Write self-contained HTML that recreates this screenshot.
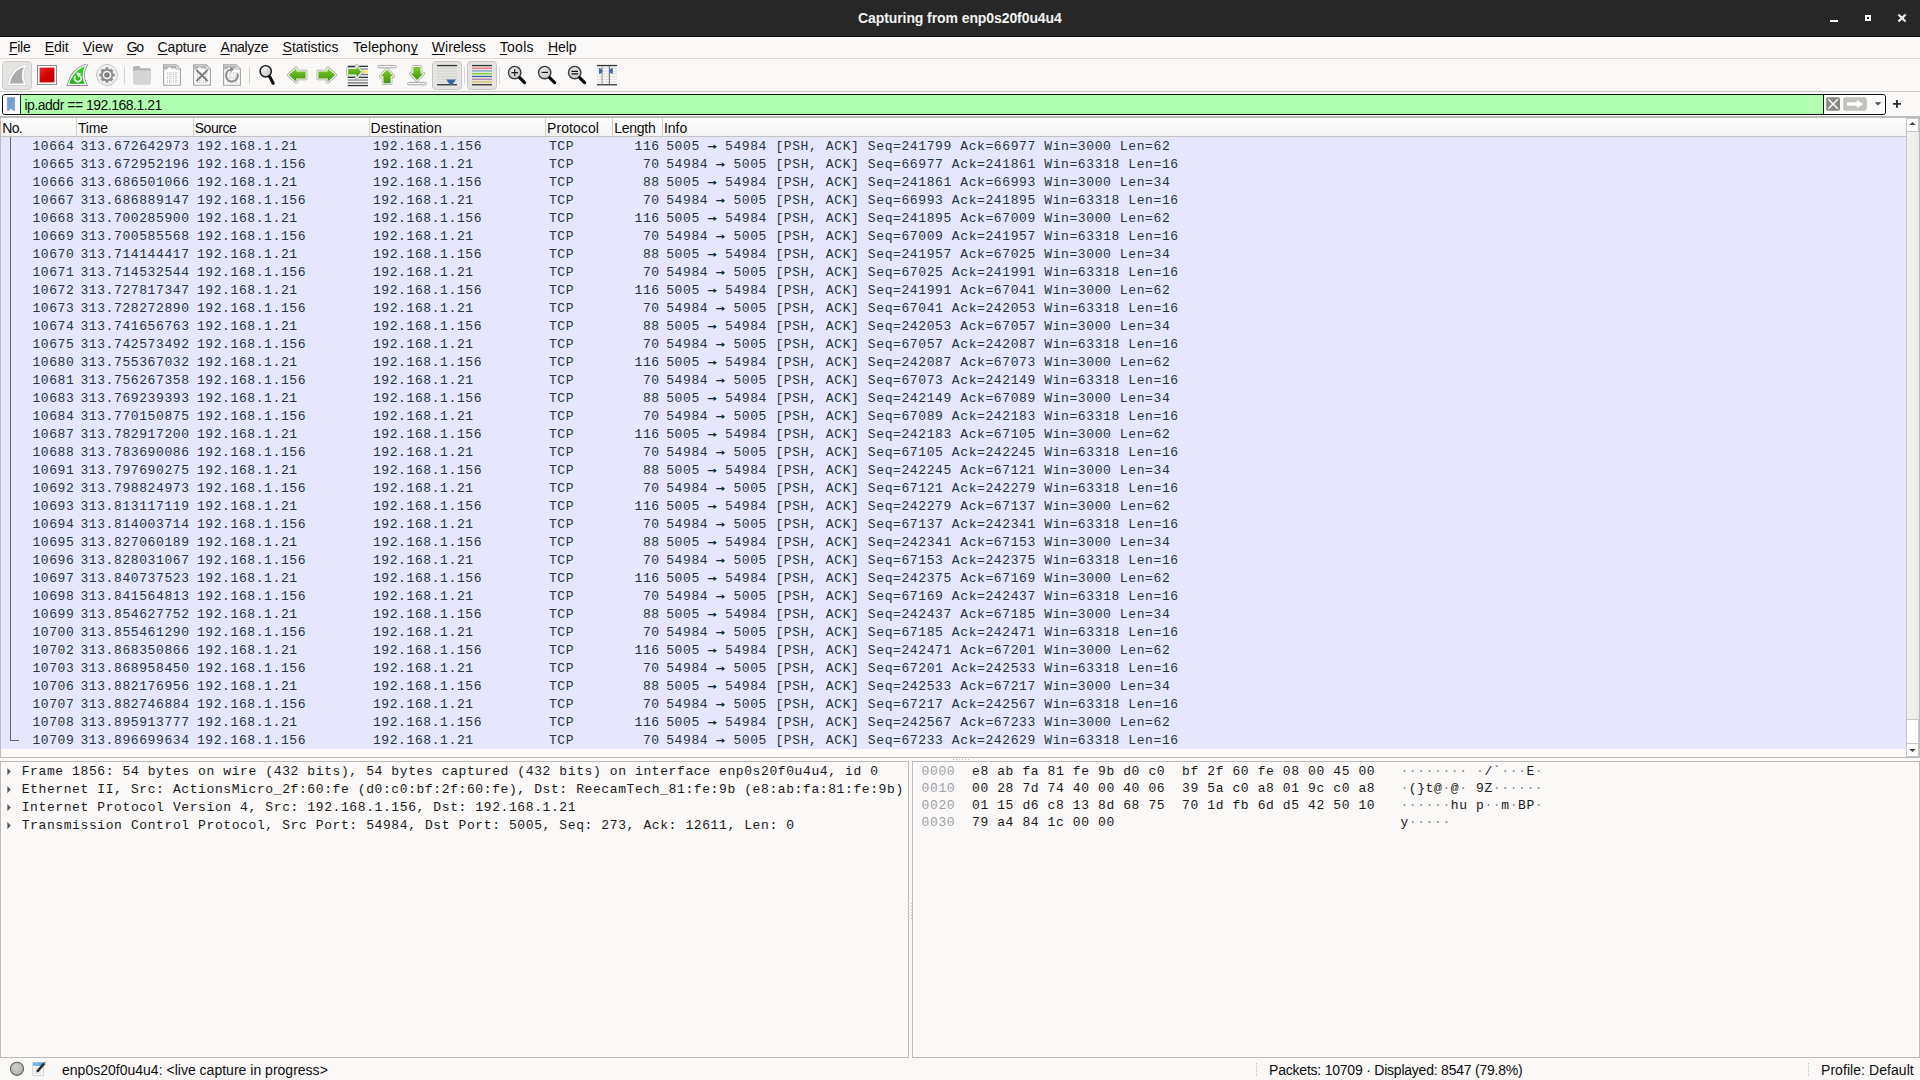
<!DOCTYPE html>
<html><head><meta charset="utf-8"><title>Capturing from enp0s20f0u4u4</title>
<style>
html,body{margin:0;padding:0}
body{width:1920px;height:1080px;position:relative;overflow:hidden;background:#faf9f8;font-family:"Liberation Sans",sans-serif;font-size:14px}
div,span,svg{position:absolute;box-sizing:border-box}
.s{white-space:pre;line-height:normal}
.s u{text-decoration:underline;text-decoration-thickness:1px;text-underline-offset:2px;text-decoration-skip-ink:none}
#title{left:0;top:0;width:1920px;height:37px;background:#272727;border-bottom:1px solid #0a0a0a}
#menusep{left:0;top:58px;width:1920px;height:1px;background:#dcdbda}
#tbsep{left:0;top:91px;width:1920px;height:1px;background:#c9c8c7}
#filter{left:2px;top:94px;width:1884px;height:21px;border:1px solid #0c0c0c;border-radius:3px;background:#fbfaf9;overflow:hidden}
#filter .l{left:0;top:0;width:17px;height:19px;border:1px solid #fff;border-right:none;border-radius:2px 0 0 2px}
#filter .dl{left:17px;top:0;width:1px;height:19px;background:#2a2a2a}
#filter .rr{left:1821px;top:0;width:61px;height:19px;border:1px solid #fff;border-left:none;border-radius:0 2px 2px 0}
#filter .g{left:18px;top:0;width:1802px;height:19px;background:#afffaf}
#filter .dv{left:1820px;top:0;width:1px;height:19px;background:#0c0c0c}
#plist{left:0;top:116px;width:1920px;height:642px;border:1px solid #bcbbba;background:#faf9f8}
#pl2{left:1px;top:117px;width:1918px;height:1px;background:#bebdbc}
#phead{left:1px;top:118px;width:1905px;height:19px;background:linear-gradient(#ffffff,#f4f3f2);border-bottom:1px solid #c4c3c2}
.hs{top:118px;width:1px;height:18px;background:#d2d1d0}
#prows{left:1px;top:137px;width:1905px;height:612px;background:#e7e6ff}
#rel{left:10px;top:137px;width:1px;height:604px;background:#62626a}
#relb{left:10px;top:740px;width:9px;height:1px;background:#62626a}
.r{left:0;width:1906px;height:18px;font-family:"Liberation Mono",monospace;font-size:13px;letter-spacing:0.6px;line-height:19px;color:#22353c;white-space:pre}
.c{white-space:pre;top:0}
.c b{position:relative;top:-1px;font-weight:normal;-webkit-text-stroke:0.7px #12272e;color:#12272e}
.d{left:21.7px;width:886px;height:18px;font-family:"Liberation Mono",monospace;font-size:13px;letter-spacing:0.6px;line-height:19px;color:#181818;white-space:pre}
.d .tri{left:-14.5px;top:4.5px}
.h{left:0;width:1920px;height:17px;font-family:"Liberation Mono",monospace;font-size:13px;letter-spacing:0.6px;line-height:19px;color:#181818;white-space:pre}
.ho{color:#a0a0a8}
.h i{font-style:normal;color:#8c8c8c}
#sb{left:1906px;top:118px;width:13px;height:639px;background:linear-gradient(90deg,#f1f1ef,#efefed 70%,#e7e7e6);border-left:1px solid #c6c5c4}
#sb div{left:0;width:12px;background:#fff;border:1px solid #c8c7c6;border-left:none}
#sb .up{top:0;height:14px}
#sb .th{top:601px;height:25px;border-bottom:none}
#sb .dn{top:625px;height:14px}
#pdet{left:0;top:761px;width:909px;height:297px;border:1px solid #bdbcbb}
#phex{left:912px;top:761px;width:1008px;height:297px;border:1px solid #bdbcbb}
</style></head><body>
<div id="title"></div>
<div id="menusep"></div><div id="tbsep"></div>
<div id="filter"><div class="l"></div><div class="dl"></div><div class="g"></div><div class="dv"></div><div class="rr"></div></div>
<div id="plist"></div><div id="pl2"></div>
<div id="phead"></div>
<div class="hs" style="left:76px"></div><div class="hs" style="left:193px"></div><div class="hs" style="left:369px"></div><div class="hs" style="left:545px"></div><div class="hs" style="left:612px"></div><div class="hs" style="left:662px"></div>
<div id="prows"></div><div id="rel"></div><div id="relb"></div>
<div id="sb"><div class="up"></div><div class="th"></div><div class="dn"></div></div>
<div id="pdet"></div><div id="phex"></div>
<svg style="left:0;top:59px" width="640" height="32" viewBox="0 59 640 32">
<defs>
<linearGradient id="gG" x1="0" y1="0" x2="0" y2="1"><stop offset="0" stop-color="#7ccd2a"/><stop offset="1" stop-color="#43930a"/></linearGradient>
<linearGradient id="gR" x1="0" y1="0" x2="1" y2="1"><stop offset="0" stop-color="#e62a2a"/><stop offset="0.5" stop-color="#d80000"/><stop offset="1" stop-color="#c00000"/></linearGradient>
<linearGradient id="gF" x1="0" y1="0" x2="0" y2="1"><stop offset="0" stop-color="#30e020"/><stop offset="1" stop-color="#18b010"/></linearGradient>
<radialGradient id="gL" cx="0.4" cy="0.35" r="0.7"><stop offset="0" stop-color="#ececec"/><stop offset="1" stop-color="#c4c4c4"/></radialGradient>
<clipPath id="cf"><rect x="0" y="64.1" width="640" height="40"/></clipPath><path id="fin" d="M21.2,1.6 C12.5,4.5 5.2,12 2.6,22.4 L21.6,22.4 C18.2,16 18.2,8.5 21.2,1.6 Z"/>
<g id="page"><path d="M0.6,0.6 H13.2 L17.4,4.8 V21.1 H0.6 Z" fill="#fdfdfd" stroke="#a4a4a4" stroke-width="1.1"/><path d="M1.2,1.2 H12.8 L14.5,4.4 H8.2 C7.8,3 6.6,2.6 5.6,3.4 L3.6,5.2 H1.2 Z" fill="#b4b4b4"/><path d="M12.9,0.9 V5 H17.1" fill="#e6e6e6" stroke="#b0b0b0" stroke-width="0.8"/></g>
<g id="bits"><rect x="4.1" y="7.9" width="0.9" height="3" fill="#cfcfcf"/><rect x="6.6" y="8.200000000000001" width="1.6" height="2.4" fill="none" stroke="#cfcfcf" stroke-width="0.7"/><rect x="9.899999999999999" y="7.9" width="0.9" height="3" fill="#cfcfcf"/><rect x="12.4" y="8.200000000000001" width="1.6" height="2.4" fill="none" stroke="#cfcfcf" stroke-width="0.7"/><rect x="4.1" y="11.9" width="0.9" height="3" fill="#cfcfcf"/><rect x="6.6" y="12.200000000000001" width="1.6" height="2.4" fill="none" stroke="#cfcfcf" stroke-width="0.7"/><rect x="9.899999999999999" y="11.9" width="0.9" height="3" fill="#cfcfcf"/><rect x="12.4" y="12.200000000000001" width="1.6" height="2.4" fill="none" stroke="#cfcfcf" stroke-width="0.7"/><rect x="4.1" y="15.9" width="0.9" height="3" fill="#cfcfcf"/><rect x="6.6" y="16.2" width="1.6" height="2.4" fill="none" stroke="#cfcfcf" stroke-width="0.7"/><rect x="9.899999999999999" y="15.9" width="0.9" height="3" fill="#cfcfcf"/><rect x="12.4" y="16.2" width="1.6" height="2.4" fill="none" stroke="#cfcfcf" stroke-width="0.7"/></g>
</defs>
<!-- 1 start (disabled, pressed bg) -->
<rect x="2.5" y="61.5" width="29" height="28" rx="3.5" fill="#e5e4e3" stroke="#cdcccb"/>
<g clip-path="url(#cf)"><path d="M23.8,67 C16.2,69.2 11.4,75.6 10,83.4 L23.8,83.4 C21.2,78 21.2,72.4 23.8,67 Z" fill="none" stroke="#cdcdcd" stroke-width="4.6" stroke-miterlimit="5"/><path d="M23.8,67 C16.2,69.2 11.4,75.6 10,83.4 L23.8,83.4 C21.2,78 21.2,72.4 23.8,67 Z" fill="none" stroke="#fdfdfd" stroke-width="3.4" stroke-miterlimit="5"/><path d="M23.8,67 C16.2,69.2 11.4,75.6 10,83.4 L23.8,83.4 C21.2,78 21.2,72.4 23.8,67 Z" fill="#ababab"/></g>
<!-- 2 stop -->
<rect x="37.5" y="65.5" width="19" height="19" fill="#fdfdfd" stroke="#8e8e8e"/>
<rect x="39.6" y="67.6" width="14.8" height="14.8" fill="url(#gR)"/>
<!-- 3 restart -->
<g clip-path="url(#cf)"><path d="M85,66.2 C77,69.2 71.4,76 69.4,83.8 L84.8,83.8 C82,78 82,72 85,66.2 Z" fill="none" stroke="#8c8c8c" stroke-width="4.2" stroke-miterlimit="5"/><path d="M85,66.2 C77,69.2 71.4,76 69.4,83.8 L84.8,83.8 C82,78 82,72 85,66.2 Z" fill="none" stroke="#fdfdfd" stroke-width="2.6" stroke-miterlimit="5"/><path d="M85,66.2 C77,69.2 71.4,76 69.4,83.8 L84.8,83.8 C82,78 82,72 85,66.2 Z" fill="url(#gF)"/></g>
<path d="M75.2,76.2 A3.4,3.4 0 1 0 79.6,75.4" fill="none" stroke="#fff" stroke-width="1.8"/><path d="M76,72.6 L81,73.2 L78.4,77.4 Z" fill="#fff"/>
<!-- 4 options gear -->
<circle cx="107" cy="75" r="10.5" fill="#fbfbfb" stroke="#c4c4c4" stroke-width="1"/><circle cx="107" cy="75" r="9.3" fill="none" stroke="#e2e2e2" stroke-width="0.9"/>
<g transform="translate(107,75)" fill="#8d8d8d"><circle r="6.3"/>
<g id="teeth"><rect x="-1.6" y="-7.7" width="3.2" height="15.4" rx="0.5"/><rect x="-7.7" y="-1.6" width="15.4" height="3.2" rx="0.5"/></g><use href="#teeth" transform="rotate(45)"/>
<circle r="4.3" fill="#fbfbfb"/><circle r="2.8" fill="#808080"/></g>
<!-- sep -->
<rect x="124" y="67" width="1" height="17" fill="#d3d2d1"/>
<!-- 5 open folder (disabled) -->
<path d="M133,67.6 Q133,66 134.6,66 H138.6 Q139.8,66 140.2,67.2 L140.6,68.2 H149.4 Q151,68.2 151,69.8 V71 H133 Z" fill="#b2b2b2"/>
<rect x="133" y="70.2" width="18" height="14.6" rx="1.8" fill="#d4d4d4"/>
<!-- 6 save -->
<g transform="translate(163,64.2)"><use href="#page"/><use href="#bits"/></g>
<!-- 7 close -->
<g transform="translate(193,64.2)"><use href="#page"/><use href="#bits"/><path d="M3.4,5.6 L14.6,17 M14.6,5.6 L3.4,17" stroke="#7a7a7a" stroke-width="1.9" fill="none"/></g>
<!-- 8 reload -->
<g transform="translate(223,64.2)"><use href="#page"/><use href="#bits"/><path d="M7.6,5.4 A6,6 0 1 0 14.6,9.4" stroke="#8a8a8a" stroke-width="1.8" fill="none"/><path d="M7,2.4 L11.2,5 L7.4,8 Z" fill="#8a8a8a"/></g>
<rect x="249" y="67" width="1" height="17" fill="#d3d2d1"/>
<!-- 9 find -->
<circle cx="265.7" cy="71.3" r="5.6" fill="url(#gL)" stroke="#1c1c1c" stroke-width="1.5"/>
<path d="M262.2,69.2 A3.8,3.8 0 0 1 267.4,67.6" stroke="#fff" stroke-width="0.9" fill="none" opacity="0.9"/>
<path d="M269.6,76.6 L273.2,83.2" stroke="#0a0a0a" stroke-width="3.1" stroke-linecap="round"/>
<!-- 10 back -->
<g id="larr"><path d="M288.8,75 L296.4,68.2 V71.6 H305.6 V78.4 H296.4 V81.8 Z" fill="none" stroke="#a2a2a2" stroke-width="3.6" stroke-linejoin="round"/><path d="M288.8,75 L296.4,68.2 V71.6 H305.6 V78.4 H296.4 V81.8 Z" fill="none" stroke="#fbfbfb" stroke-width="2.2" stroke-linejoin="round"/><path d="M288.8,75 L296.4,68.2 V71.6 H305.6 V78.4 H296.4 V81.8 Z" fill="url(#gG)"/></g>
<!-- 11 forward -->
<use href="#larr" transform="translate(624,0) scale(-1,1)"/>
<!-- 12 goto -->
<g><rect x="347.7" y="65.7" width="20.3" height="1.3" fill="#2e3436"/><rect x="347.7" y="68.4" width="20.3" height="1.3" fill="#8a8c88"/><rect x="347.7" y="71" width="20.3" height="1.6" fill="#b9bbb6"/><rect x="361" y="70.6" width="7" height="2.2" fill="#fce94f"/><rect x="347.7" y="73.9" width="20.3" height="1.3" fill="#6a6d69"/><rect x="347.7" y="76.7" width="20.3" height="1.3" fill="#2e3436"/><rect x="347.7" y="79.4" width="20.3" height="1.3" fill="#8a8c88"/><rect x="347.7" y="82.2" width="20.3" height="1.3" fill="#6a6d69"/><rect x="347.7" y="84.9" width="20.3" height="1.3" fill="#2e3436"/>
<path d="M348.2,69 H356.6 V66 L361.4,71.8 L356.6,77.6 V74.6 H348.2 Z" fill="none" stroke="#9c9c9c" stroke-width="3.6" stroke-linejoin="round"/><path d="M348.2,69 H356.6 V66 L361.4,71.8 L356.6,77.6 V74.6 H348.2 Z" fill="none" stroke="#fbfbfb" stroke-width="2.2" stroke-linejoin="round"/><path d="M348.2,69 H356.6 V66 L361.4,71.8 L356.6,77.6 V74.6 H348.2 Z" fill="url(#gG)"/></g>
<!-- 13 top -->
<rect x="377.5" y="65.4" width="19" height="2.4" rx="1.2" fill="#f3f3f3" stroke="#a2a2a2" stroke-width="0.9"/>
<path d="M387,69.6 L393.3,76.2 H390.6 V83.2 H383.4 V76.2 H380.7 Z" fill="none" stroke="#a2a2a2" stroke-width="3.6" stroke-linejoin="round"/><path d="M387,69.6 L393.3,76.2 H390.6 V83.2 H383.4 V76.2 H380.7 Z" fill="none" stroke="#fbfbfb" stroke-width="2.2" stroke-linejoin="round"/><path d="M387,69.6 L393.3,76.2 H390.6 V83.2 H383.4 V76.2 H380.7 Z" fill="url(#gG)"/>
<!-- 14 bottom -->
<path d="M417,80 L423.3,73.6 H420.6 V67 H413.4 V73.6 H410.7 Z" fill="none" stroke="#a2a2a2" stroke-width="3.6" stroke-linejoin="round"/><path d="M417,80 L423.3,73.6 H420.6 V67 H413.4 V73.6 H410.7 Z" fill="none" stroke="#fbfbfb" stroke-width="2.2" stroke-linejoin="round"/><path d="M417,80 L423.3,73.6 H420.6 V67 H413.4 V73.6 H410.7 Z" fill="url(#gG)"/>
<rect x="407.5" y="82.4" width="19" height="2.4" rx="1.2" fill="#f3f3f3" stroke="#a2a2a2" stroke-width="0.9"/>
<!-- 15 autoscroll (checked) -->
<rect x="432.5" y="61.5" width="29" height="28" rx="3.5" fill="#e5e4e3" stroke="#c6c5c4"/>
<g fill="#d5d8d1"><rect x="437" y="67.6" width="20" height="1.2"/><rect x="437" y="70.4" width="20" height="1.2"/><rect x="437" y="73.1" width="20" height="1.2"/><rect x="437" y="75.9" width="20" height="1.2"/><rect x="437" y="78.6" width="20" height="1.2"/><rect x="437" y="81.4" width="20" height="1.2"/></g>
<rect x="437" y="64.9" width="20" height="1.3" fill="#2e3436"/><rect x="437" y="84.1" width="20" height="1.3" fill="#2e3436"/>
<path d="M446.2,79.6 H456 L452.4,84.4 Q451.1,85.4 449.8,84.4 Z" fill="#3465a4"/>
<rect x="464" y="67" width="1" height="17" fill="#d8d7d6"/>
<!-- 16 colorize (checked) -->
<rect x="467.5" y="61.5" width="29" height="28" rx="3.5" fill="#e5e4e3" stroke="#c6c5c4"/>
<rect x="472" y="64.9" width="20" height="1.3" fill="#2e3436"/><rect x="472" y="67.6" width="20" height="1.25" fill="#ef6b6b"/><rect x="472" y="70.3" width="20" height="1.25" fill="#7f9fcd"/><rect x="472" y="73.1" width="20" height="1.2" fill="#73d216"/><rect x="472" y="75.85" width="20" height="1.2" fill="#3465a4"/><rect x="472" y="78.6" width="20" height="1.25" fill="#ad7fa8"/><rect x="472" y="81.35" width="20" height="1.25" fill="#d8bd50"/><rect x="472" y="84.1" width="20" height="1.3" fill="#2e3436"/>
<rect x="499" y="67" width="1" height="17" fill="#d8d7d6"/>
<!-- 17-19 zoom -->
<g id="zm"><circle cx="514.7" cy="72.6" r="6.2" fill="url(#gL)" stroke="#3a3a3a" stroke-width="1.4"/><path d="M519.8,77.8 L524.6,82.6" stroke="#0a0a0a" stroke-width="3.2" stroke-linecap="round"/></g>
<path d="M511.4,72.6 H518 M514.7,69.3 V75.9" stroke="#111" stroke-width="1.2"/>
<use href="#zm" x="30"/><path d="M541.6,72.4 H548" stroke="#111" stroke-width="1.2"/>
<use href="#zm" x="60"/><path d="M571.4,71.4 H578 M571.4,73.8 H578" stroke="#111" stroke-width="1.2"/>
<!-- 20 resize columns -->
<g fill="#dfe1dc"><rect x="597" y="67.8" width="20" height="1.2"/><rect x="597" y="70.5" width="20" height="1.2"/><rect x="597" y="73.3" width="20" height="1.2"/><rect x="597" y="76" width="20" height="1.2"/><rect x="597" y="78.8" width="20" height="1.2"/><rect x="597" y="81.5" width="20" height="1.2"/></g>
<rect x="597" y="64.9" width="20" height="1.3" fill="#2e3436"/><rect x="597" y="84.1" width="20" height="1.3" fill="#2e3436"/>
<rect x="601.4" y="66" width="1.4" height="18.4" fill="#aeb0ab"/><rect x="608.8" y="66" width="1.2" height="18.4" fill="#777a75"/>
<path d="M599,68 Q602.6,69 602.6,71 Q602.6,73 599,74 Z" fill="#3a6db8"/><path d="M612.8,68 Q609.2,69 609.2,71 Q609.2,73 612.8,74 Z" fill="#3a6db8"/>
</svg>
<!-- window controls -->
<svg style="left:1820px;top:8px" width="96" height="20" viewBox="1820 8 96 20">
<rect x="1830" y="20" width="8" height="2" fill="#f6f6f6"/>
<rect x="1866" y="16" width="4" height="4" fill="#0a0a0a" stroke="#f6f6f6" stroke-width="2"/>
<path d="M1899.2,15.2 L1904.8,20.8 M1904.8,15.2 L1899.2,20.8" stroke="#f6f6f6" stroke-width="2.2" stroke-linecap="square" fill="none"/>
</svg>
<!-- filter bar icons -->
<svg style="left:0;top:94px" width="1920" height="22" viewBox="0 94 1920 22">
<defs><linearGradient id="gB" x1="0" y1="0" x2="0" y2="1"><stop offset="0" stop-color="#6c9ad2"/><stop offset="1" stop-color="#7aa6d8"/></linearGradient></defs>
<path d="M7.1,97.3 H14.9 V110.9 H13.7 L11,108.7 L8.3,110.9 H7.1 Z" fill="url(#gB)"/>
<rect x="1826.2" y="97.2" width="13.8" height="13.6" rx="2" fill="#888a85"/>
<path d="M1828.4,99.3 L1837.8,108.7 M1837.8,99.3 L1828.4,108.7" stroke="#fdfdfd" stroke-width="1.45" fill="none"/>
<rect x="1843.2" y="97.2" width="23.6" height="13.6" rx="2.2" fill="#c2c1be"/>
<path d="M1847,102.2 H1856.8 V99.5 L1863,104 L1856.8,108.5 V105.8 H1847 Z" fill="#fdfdfd"/>
<path d="M1874.6,102.3 H1881.4 L1878,105.6 Z" fill="#4e4e4e"/>
<path d="M1893,103.9 H1901 M1897,100 V107.8" stroke="#2c2c2c" stroke-width="1.9" fill="none"/>
</svg>
<!-- scrollbar arrows -->
<svg style="left:1907px;top:119px" width="12" height="12" viewBox="0 0 12 12"><path d="M2.1,6.1 L5.5,2.9 L8.9,6.1 Z" fill="#4a4a4a"/></svg>
<svg style="left:1907px;top:744px" width="12" height="12" viewBox="0 0 12 12"><path d="M2.1,4.9 L5.5,8.1 L8.9,4.9 Z" fill="#4a4a4a"/></svg>
<!-- splitter dots -->
<svg style="left:950px;top:758px" width="24" height="3" viewBox="950 758 24 3"><g fill="#bdbcbb"><rect x="953" y="759" width="1" height="1"/><rect x="956" y="759" width="1" height="1"/><rect x="959" y="759" width="1" height="1"/><rect x="962" y="759" width="1" height="1"/><rect x="965" y="759" width="1" height="1"/><rect x="968" y="759" width="1" height="1"/></g></svg>
<svg style="left:910px;top:902px" width="3" height="24" viewBox="0 0 3 24"><g fill="#c4c3c2"><rect x="1" y="1" width="1" height="1"/><rect x="1" y="4" width="1" height="1"/><rect x="1" y="7" width="1" height="1"/><rect x="1" y="10" width="1" height="1"/><rect x="1" y="13" width="1" height="1"/><rect x="1" y="16" width="1" height="1"/></g></svg>
<!-- status bar -->
<svg style="left:0;top:1058px" width="1920" height="22" viewBox="0 1058 1920 22">
<defs><radialGradient id="gC" cx="0.4" cy="0.35" r="0.8"><stop offset="0" stop-color="#d0d1ce"/><stop offset="1" stop-color="#a9aaa7"/></radialGradient></defs>
<circle cx="17" cy="1068.8" r="6.6" fill="url(#gC)" stroke="#5e5f5c" stroke-width="1.1"/>
<g><rect x="32.8" y="1062.4" width="10.6" height="13" fill="#fbfbfb" stroke="#c9c9c9" stroke-width="0.8"/><rect x="33.2" y="1062.6" width="9.8" height="3.2" fill="#58a3e6"/><path d="M34.5,1064.6 L35.6,1063.4 L36.6,1064.4 L37.6,1063.6 L38.6,1064.8" stroke="#d8ecff" stroke-width="0.7" fill="none"/><rect x="34.4" y="1068" width="4" height="0.8" fill="#d0d0d0"/><rect x="34.4" y="1070.4" width="6.6" height="0.8" fill="#d0d0d0"/><rect x="34.4" y="1072.8" width="6.6" height="0.8" fill="#d0d0d0"/>
<path d="M37.4,1071.4 L44.4,1063.2" stroke="#2a2a2a" stroke-width="2.5"/><path d="M36.4,1072.6 L36.9,1070.6 L38.4,1071.8 Z" fill="#111"/><path d="M44.2,1063.4 L45.4,1062.2" stroke="#888" stroke-width="1.8"/></g>
<g fill="#c0bfbe"><rect x="1256" y="1063" width="1" height="1"/><rect x="1256" y="1065" width="1" height="1"/><rect x="1256" y="1067" width="1" height="1"/><rect x="1256" y="1069" width="1" height="1"/><rect x="1256" y="1071" width="1" height="1"/><rect x="1256" y="1073" width="1" height="1"/><rect x="1256" y="1075" width="1" height="1"/>
<rect x="1808" y="1063" width="1" height="1"/><rect x="1808" y="1065" width="1" height="1"/><rect x="1808" y="1067" width="1" height="1"/><rect x="1808" y="1069" width="1" height="1"/><rect x="1808" y="1071" width="1" height="1"/><rect x="1808" y="1073" width="1" height="1"/><rect x="1808" y="1075" width="1" height="1"/></g>
</svg>

<div class="r" style="top:137px"><span class="c" style="right:1831.6px">10664</span><span class="c" style="left:80.4px">313.672642973</span><span class="c" style="left:196.9px">192.168.1.21</span><span class="c" style="left:372.9px">192.168.1.156</span><span class="c" style="left:548.9px">TCP</span><span class="c" style="right:1246.3px">116</span><span class="c" style="left:666.2px">5005 <b>→</b> 54984 [PSH, ACK] Seq=241799 Ack=66977 Win=3000 Len=62</span></div>
<div class="r" style="top:155px"><span class="c" style="right:1831.6px">10665</span><span class="c" style="left:80.4px">313.672952196</span><span class="c" style="left:196.9px">192.168.1.156</span><span class="c" style="left:372.9px">192.168.1.21</span><span class="c" style="left:548.9px">TCP</span><span class="c" style="right:1246.3px">70</span><span class="c" style="left:666.2px">54984 <b>→</b> 5005 [PSH, ACK] Seq=66977 Ack=241861 Win=63318 Len=16</span></div>
<div class="r" style="top:173px"><span class="c" style="right:1831.6px">10666</span><span class="c" style="left:80.4px">313.686501066</span><span class="c" style="left:196.9px">192.168.1.21</span><span class="c" style="left:372.9px">192.168.1.156</span><span class="c" style="left:548.9px">TCP</span><span class="c" style="right:1246.3px">88</span><span class="c" style="left:666.2px">5005 <b>→</b> 54984 [PSH, ACK] Seq=241861 Ack=66993 Win=3000 Len=34</span></div>
<div class="r" style="top:191px"><span class="c" style="right:1831.6px">10667</span><span class="c" style="left:80.4px">313.686889147</span><span class="c" style="left:196.9px">192.168.1.156</span><span class="c" style="left:372.9px">192.168.1.21</span><span class="c" style="left:548.9px">TCP</span><span class="c" style="right:1246.3px">70</span><span class="c" style="left:666.2px">54984 <b>→</b> 5005 [PSH, ACK] Seq=66993 Ack=241895 Win=63318 Len=16</span></div>
<div class="r" style="top:209px"><span class="c" style="right:1831.6px">10668</span><span class="c" style="left:80.4px">313.700285900</span><span class="c" style="left:196.9px">192.168.1.21</span><span class="c" style="left:372.9px">192.168.1.156</span><span class="c" style="left:548.9px">TCP</span><span class="c" style="right:1246.3px">116</span><span class="c" style="left:666.2px">5005 <b>→</b> 54984 [PSH, ACK] Seq=241895 Ack=67009 Win=3000 Len=62</span></div>
<div class="r" style="top:227px"><span class="c" style="right:1831.6px">10669</span><span class="c" style="left:80.4px">313.700585568</span><span class="c" style="left:196.9px">192.168.1.156</span><span class="c" style="left:372.9px">192.168.1.21</span><span class="c" style="left:548.9px">TCP</span><span class="c" style="right:1246.3px">70</span><span class="c" style="left:666.2px">54984 <b>→</b> 5005 [PSH, ACK] Seq=67009 Ack=241957 Win=63318 Len=16</span></div>
<div class="r" style="top:245px"><span class="c" style="right:1831.6px">10670</span><span class="c" style="left:80.4px">313.714144417</span><span class="c" style="left:196.9px">192.168.1.21</span><span class="c" style="left:372.9px">192.168.1.156</span><span class="c" style="left:548.9px">TCP</span><span class="c" style="right:1246.3px">88</span><span class="c" style="left:666.2px">5005 <b>→</b> 54984 [PSH, ACK] Seq=241957 Ack=67025 Win=3000 Len=34</span></div>
<div class="r" style="top:263px"><span class="c" style="right:1831.6px">10671</span><span class="c" style="left:80.4px">313.714532544</span><span class="c" style="left:196.9px">192.168.1.156</span><span class="c" style="left:372.9px">192.168.1.21</span><span class="c" style="left:548.9px">TCP</span><span class="c" style="right:1246.3px">70</span><span class="c" style="left:666.2px">54984 <b>→</b> 5005 [PSH, ACK] Seq=67025 Ack=241991 Win=63318 Len=16</span></div>
<div class="r" style="top:281px"><span class="c" style="right:1831.6px">10672</span><span class="c" style="left:80.4px">313.727817347</span><span class="c" style="left:196.9px">192.168.1.21</span><span class="c" style="left:372.9px">192.168.1.156</span><span class="c" style="left:548.9px">TCP</span><span class="c" style="right:1246.3px">116</span><span class="c" style="left:666.2px">5005 <b>→</b> 54984 [PSH, ACK] Seq=241991 Ack=67041 Win=3000 Len=62</span></div>
<div class="r" style="top:299px"><span class="c" style="right:1831.6px">10673</span><span class="c" style="left:80.4px">313.728272890</span><span class="c" style="left:196.9px">192.168.1.156</span><span class="c" style="left:372.9px">192.168.1.21</span><span class="c" style="left:548.9px">TCP</span><span class="c" style="right:1246.3px">70</span><span class="c" style="left:666.2px">54984 <b>→</b> 5005 [PSH, ACK] Seq=67041 Ack=242053 Win=63318 Len=16</span></div>
<div class="r" style="top:317px"><span class="c" style="right:1831.6px">10674</span><span class="c" style="left:80.4px">313.741656763</span><span class="c" style="left:196.9px">192.168.1.21</span><span class="c" style="left:372.9px">192.168.1.156</span><span class="c" style="left:548.9px">TCP</span><span class="c" style="right:1246.3px">88</span><span class="c" style="left:666.2px">5005 <b>→</b> 54984 [PSH, ACK] Seq=242053 Ack=67057 Win=3000 Len=34</span></div>
<div class="r" style="top:335px"><span class="c" style="right:1831.6px">10675</span><span class="c" style="left:80.4px">313.742573492</span><span class="c" style="left:196.9px">192.168.1.156</span><span class="c" style="left:372.9px">192.168.1.21</span><span class="c" style="left:548.9px">TCP</span><span class="c" style="right:1246.3px">70</span><span class="c" style="left:666.2px">54984 <b>→</b> 5005 [PSH, ACK] Seq=67057 Ack=242087 Win=63318 Len=16</span></div>
<div class="r" style="top:353px"><span class="c" style="right:1831.6px">10680</span><span class="c" style="left:80.4px">313.755367032</span><span class="c" style="left:196.9px">192.168.1.21</span><span class="c" style="left:372.9px">192.168.1.156</span><span class="c" style="left:548.9px">TCP</span><span class="c" style="right:1246.3px">116</span><span class="c" style="left:666.2px">5005 <b>→</b> 54984 [PSH, ACK] Seq=242087 Ack=67073 Win=3000 Len=62</span></div>
<div class="r" style="top:371px"><span class="c" style="right:1831.6px">10681</span><span class="c" style="left:80.4px">313.756267358</span><span class="c" style="left:196.9px">192.168.1.156</span><span class="c" style="left:372.9px">192.168.1.21</span><span class="c" style="left:548.9px">TCP</span><span class="c" style="right:1246.3px">70</span><span class="c" style="left:666.2px">54984 <b>→</b> 5005 [PSH, ACK] Seq=67073 Ack=242149 Win=63318 Len=16</span></div>
<div class="r" style="top:389px"><span class="c" style="right:1831.6px">10683</span><span class="c" style="left:80.4px">313.769239393</span><span class="c" style="left:196.9px">192.168.1.21</span><span class="c" style="left:372.9px">192.168.1.156</span><span class="c" style="left:548.9px">TCP</span><span class="c" style="right:1246.3px">88</span><span class="c" style="left:666.2px">5005 <b>→</b> 54984 [PSH, ACK] Seq=242149 Ack=67089 Win=3000 Len=34</span></div>
<div class="r" style="top:407px"><span class="c" style="right:1831.6px">10684</span><span class="c" style="left:80.4px">313.770150875</span><span class="c" style="left:196.9px">192.168.1.156</span><span class="c" style="left:372.9px">192.168.1.21</span><span class="c" style="left:548.9px">TCP</span><span class="c" style="right:1246.3px">70</span><span class="c" style="left:666.2px">54984 <b>→</b> 5005 [PSH, ACK] Seq=67089 Ack=242183 Win=63318 Len=16</span></div>
<div class="r" style="top:425px"><span class="c" style="right:1831.6px">10687</span><span class="c" style="left:80.4px">313.782917200</span><span class="c" style="left:196.9px">192.168.1.21</span><span class="c" style="left:372.9px">192.168.1.156</span><span class="c" style="left:548.9px">TCP</span><span class="c" style="right:1246.3px">116</span><span class="c" style="left:666.2px">5005 <b>→</b> 54984 [PSH, ACK] Seq=242183 Ack=67105 Win=3000 Len=62</span></div>
<div class="r" style="top:443px"><span class="c" style="right:1831.6px">10688</span><span class="c" style="left:80.4px">313.783690086</span><span class="c" style="left:196.9px">192.168.1.156</span><span class="c" style="left:372.9px">192.168.1.21</span><span class="c" style="left:548.9px">TCP</span><span class="c" style="right:1246.3px">70</span><span class="c" style="left:666.2px">54984 <b>→</b> 5005 [PSH, ACK] Seq=67105 Ack=242245 Win=63318 Len=16</span></div>
<div class="r" style="top:461px"><span class="c" style="right:1831.6px">10691</span><span class="c" style="left:80.4px">313.797690275</span><span class="c" style="left:196.9px">192.168.1.21</span><span class="c" style="left:372.9px">192.168.1.156</span><span class="c" style="left:548.9px">TCP</span><span class="c" style="right:1246.3px">88</span><span class="c" style="left:666.2px">5005 <b>→</b> 54984 [PSH, ACK] Seq=242245 Ack=67121 Win=3000 Len=34</span></div>
<div class="r" style="top:479px"><span class="c" style="right:1831.6px">10692</span><span class="c" style="left:80.4px">313.798824973</span><span class="c" style="left:196.9px">192.168.1.156</span><span class="c" style="left:372.9px">192.168.1.21</span><span class="c" style="left:548.9px">TCP</span><span class="c" style="right:1246.3px">70</span><span class="c" style="left:666.2px">54984 <b>→</b> 5005 [PSH, ACK] Seq=67121 Ack=242279 Win=63318 Len=16</span></div>
<div class="r" style="top:497px"><span class="c" style="right:1831.6px">10693</span><span class="c" style="left:80.4px">313.813117119</span><span class="c" style="left:196.9px">192.168.1.21</span><span class="c" style="left:372.9px">192.168.1.156</span><span class="c" style="left:548.9px">TCP</span><span class="c" style="right:1246.3px">116</span><span class="c" style="left:666.2px">5005 <b>→</b> 54984 [PSH, ACK] Seq=242279 Ack=67137 Win=3000 Len=62</span></div>
<div class="r" style="top:515px"><span class="c" style="right:1831.6px">10694</span><span class="c" style="left:80.4px">313.814003714</span><span class="c" style="left:196.9px">192.168.1.156</span><span class="c" style="left:372.9px">192.168.1.21</span><span class="c" style="left:548.9px">TCP</span><span class="c" style="right:1246.3px">70</span><span class="c" style="left:666.2px">54984 <b>→</b> 5005 [PSH, ACK] Seq=67137 Ack=242341 Win=63318 Len=16</span></div>
<div class="r" style="top:533px"><span class="c" style="right:1831.6px">10695</span><span class="c" style="left:80.4px">313.827060189</span><span class="c" style="left:196.9px">192.168.1.21</span><span class="c" style="left:372.9px">192.168.1.156</span><span class="c" style="left:548.9px">TCP</span><span class="c" style="right:1246.3px">88</span><span class="c" style="left:666.2px">5005 <b>→</b> 54984 [PSH, ACK] Seq=242341 Ack=67153 Win=3000 Len=34</span></div>
<div class="r" style="top:551px"><span class="c" style="right:1831.6px">10696</span><span class="c" style="left:80.4px">313.828031067</span><span class="c" style="left:196.9px">192.168.1.156</span><span class="c" style="left:372.9px">192.168.1.21</span><span class="c" style="left:548.9px">TCP</span><span class="c" style="right:1246.3px">70</span><span class="c" style="left:666.2px">54984 <b>→</b> 5005 [PSH, ACK] Seq=67153 Ack=242375 Win=63318 Len=16</span></div>
<div class="r" style="top:569px"><span class="c" style="right:1831.6px">10697</span><span class="c" style="left:80.4px">313.840737523</span><span class="c" style="left:196.9px">192.168.1.21</span><span class="c" style="left:372.9px">192.168.1.156</span><span class="c" style="left:548.9px">TCP</span><span class="c" style="right:1246.3px">116</span><span class="c" style="left:666.2px">5005 <b>→</b> 54984 [PSH, ACK] Seq=242375 Ack=67169 Win=3000 Len=62</span></div>
<div class="r" style="top:587px"><span class="c" style="right:1831.6px">10698</span><span class="c" style="left:80.4px">313.841564813</span><span class="c" style="left:196.9px">192.168.1.156</span><span class="c" style="left:372.9px">192.168.1.21</span><span class="c" style="left:548.9px">TCP</span><span class="c" style="right:1246.3px">70</span><span class="c" style="left:666.2px">54984 <b>→</b> 5005 [PSH, ACK] Seq=67169 Ack=242437 Win=63318 Len=16</span></div>
<div class="r" style="top:605px"><span class="c" style="right:1831.6px">10699</span><span class="c" style="left:80.4px">313.854627752</span><span class="c" style="left:196.9px">192.168.1.21</span><span class="c" style="left:372.9px">192.168.1.156</span><span class="c" style="left:548.9px">TCP</span><span class="c" style="right:1246.3px">88</span><span class="c" style="left:666.2px">5005 <b>→</b> 54984 [PSH, ACK] Seq=242437 Ack=67185 Win=3000 Len=34</span></div>
<div class="r" style="top:623px"><span class="c" style="right:1831.6px">10700</span><span class="c" style="left:80.4px">313.855461290</span><span class="c" style="left:196.9px">192.168.1.156</span><span class="c" style="left:372.9px">192.168.1.21</span><span class="c" style="left:548.9px">TCP</span><span class="c" style="right:1246.3px">70</span><span class="c" style="left:666.2px">54984 <b>→</b> 5005 [PSH, ACK] Seq=67185 Ack=242471 Win=63318 Len=16</span></div>
<div class="r" style="top:641px"><span class="c" style="right:1831.6px">10702</span><span class="c" style="left:80.4px">313.868350866</span><span class="c" style="left:196.9px">192.168.1.21</span><span class="c" style="left:372.9px">192.168.1.156</span><span class="c" style="left:548.9px">TCP</span><span class="c" style="right:1246.3px">116</span><span class="c" style="left:666.2px">5005 <b>→</b> 54984 [PSH, ACK] Seq=242471 Ack=67201 Win=3000 Len=62</span></div>
<div class="r" style="top:659px"><span class="c" style="right:1831.6px">10703</span><span class="c" style="left:80.4px">313.868958450</span><span class="c" style="left:196.9px">192.168.1.156</span><span class="c" style="left:372.9px">192.168.1.21</span><span class="c" style="left:548.9px">TCP</span><span class="c" style="right:1246.3px">70</span><span class="c" style="left:666.2px">54984 <b>→</b> 5005 [PSH, ACK] Seq=67201 Ack=242533 Win=63318 Len=16</span></div>
<div class="r" style="top:677px"><span class="c" style="right:1831.6px">10706</span><span class="c" style="left:80.4px">313.882176956</span><span class="c" style="left:196.9px">192.168.1.21</span><span class="c" style="left:372.9px">192.168.1.156</span><span class="c" style="left:548.9px">TCP</span><span class="c" style="right:1246.3px">88</span><span class="c" style="left:666.2px">5005 <b>→</b> 54984 [PSH, ACK] Seq=242533 Ack=67217 Win=3000 Len=34</span></div>
<div class="r" style="top:695px"><span class="c" style="right:1831.6px">10707</span><span class="c" style="left:80.4px">313.882746884</span><span class="c" style="left:196.9px">192.168.1.156</span><span class="c" style="left:372.9px">192.168.1.21</span><span class="c" style="left:548.9px">TCP</span><span class="c" style="right:1246.3px">70</span><span class="c" style="left:666.2px">54984 <b>→</b> 5005 [PSH, ACK] Seq=67217 Ack=242567 Win=63318 Len=16</span></div>
<div class="r" style="top:713px"><span class="c" style="right:1831.6px">10708</span><span class="c" style="left:80.4px">313.895913777</span><span class="c" style="left:196.9px">192.168.1.21</span><span class="c" style="left:372.9px">192.168.1.156</span><span class="c" style="left:548.9px">TCP</span><span class="c" style="right:1246.3px">116</span><span class="c" style="left:666.2px">5005 <b>→</b> 54984 [PSH, ACK] Seq=242567 Ack=67233 Win=3000 Len=62</span></div>
<div class="r" style="top:731px"><span class="c" style="right:1831.6px">10709</span><span class="c" style="left:80.4px">313.896699634</span><span class="c" style="left:196.9px">192.168.1.156</span><span class="c" style="left:372.9px">192.168.1.21</span><span class="c" style="left:548.9px">TCP</span><span class="c" style="right:1246.3px">70</span><span class="c" style="left:666.2px">54984 <b>→</b> 5005 [PSH, ACK] Seq=67233 Ack=242629 Win=63318 Len=16</span></div>
<div class="d" style="top:762px"><svg class="tri" width="5" height="9" viewBox="0 0 5 9"><path d="M0.4 1 L3.7 4.6 L0.4 8.2 Z" fill="#555"/></svg>Frame 1856: 54 bytes on wire (432 bits), 54 bytes captured (432 bits) on interface enp0s20f0u4u4, id 0</div>
<div class="d" style="top:780px"><svg class="tri" width="5" height="9" viewBox="0 0 5 9"><path d="M0.4 1 L3.7 4.6 L0.4 8.2 Z" fill="#555"/></svg>Ethernet II, Src: ActionsMicro_2f:60:fe (d0:c0:bf:2f:60:fe), Dst: ReecamTech_81:fe:9b (e8:ab:fa:81:fe:9b)</div>
<div class="d" style="top:798px"><svg class="tri" width="5" height="9" viewBox="0 0 5 9"><path d="M0.4 1 L3.7 4.6 L0.4 8.2 Z" fill="#555"/></svg>Internet Protocol Version 4, Src: 192.168.1.156, Dst: 192.168.1.21</div>
<div class="d" style="top:816px"><svg class="tri" width="5" height="9" viewBox="0 0 5 9"><path d="M0.4 1 L3.7 4.6 L0.4 8.2 Z" fill="#555"/></svg>Transmission Control Protocol, Src Port: 54984, Dst Port: 5005, Seq: 273, Ack: 12611, Len: 0</div>
<div class="h" style="top:762px"><span class="c ho" style="left:921.6px">0000</span><span class="c" style="left:972px">e8 ab fa 81 fe 9b d0 c0  bf 2f 60 fe 08 00 45 00</span><span class="c" style="left:1400.4px"><i>········</i> <i>·</i>/`<i>···</i>E<i>·</i></span></div>
<div class="h" style="top:779px"><span class="c ho" style="left:921.6px">0010</span><span class="c" style="left:972px">00 28 7d 74 40 00 40 06  39 5a c0 a8 01 9c c0 a8</span><span class="c" style="left:1400.4px"><i>·</i>(}t@<i>·</i>@<i>·</i> 9Z<i>······</i></span></div>
<div class="h" style="top:796px"><span class="c ho" style="left:921.6px">0020</span><span class="c" style="left:972px">01 15 d6 c8 13 8d 68 75  70 1d fb 6d d5 42 50 10</span><span class="c" style="left:1400.4px"><i>······</i>hu p<i>··</i>m<i>·</i>BP<i>·</i></span></div>
<div class="h" style="top:813px"><span class="c ho" style="left:921.6px">0030</span><span class="c" style="left:972px">79 a4 84 1c 00 00</span><span class="c" style="left:1400.4px">y<i>·····</i></span></div>
<div class="s" style="left:858.00px;top:10.03px;letter-spacing:-0.087px;font-size:14px;font-weight:bold;color:#f2f2f2;">Capturing from enp0s20f0u4u4</div>
<div class="s" style="left:8.90px;top:39.13px;letter-spacing:-0.237px;font-size:14px;color:#0c0c0c;"><u>F</u>ile</div>
<div class="s" style="left:44.80px;top:39.13px;letter-spacing:-0.075px;font-size:14px;color:#0c0c0c;"><u>E</u>dit</div>
<div class="s" style="left:82.80px;top:39.13px;letter-spacing:-0.031px;font-size:14px;color:#0c0c0c;"><u>V</u>iew</div>
<div class="s" style="left:126.80px;top:39.13px;letter-spacing:-1.487px;font-size:14px;color:#0c0c0c;"><u>G</u>o</div>
<div class="s" style="left:157.60px;top:39.13px;letter-spacing:-0.152px;font-size:14px;color:#0c0c0c;"><u>C</u>apture</div>
<div class="s" style="left:220.60px;top:39.13px;letter-spacing:-0.319px;font-size:14px;color:#0c0c0c;"><u>A</u>nalyze</div>
<div class="s" style="left:282.60px;top:39.13px;letter-spacing:-0.013px;font-size:14px;color:#0c0c0c;"><u>S</u>tatistics</div>
<div class="s" style="left:352.90px;top:39.13px;letter-spacing:0.134px;font-size:14px;color:#0c0c0c;">Telephon<u>y</u></div>
<div class="s" style="left:431.80px;top:39.13px;letter-spacing:0.040px;font-size:14px;color:#0c0c0c;"><u>W</u>ireless</div>
<div class="s" style="left:499.80px;top:39.13px;letter-spacing:0.253px;font-size:14px;color:#0c0c0c;"><u>T</u>ools</div>
<div class="s" style="left:547.90px;top:39.13px;letter-spacing:-0.066px;font-size:14px;color:#0c0c0c;"><u>H</u>elp</div>
<div class="s" style="left:24.50px;top:96.93px;letter-spacing:-0.499px;font-size:14px;color:#0c0c0c;">ip.addr == 192.168.1.21</div>
<div class="s" style="left:2.30px;top:119.93px;letter-spacing:-0.748px;font-size:14px;color:#0c0c0c;">No.</div>
<div class="s" style="left:78.00px;top:119.93px;letter-spacing:-0.198px;font-size:14px;color:#0c0c0c;">Time</div>
<div class="s" style="left:194.70px;top:119.93px;letter-spacing:-0.452px;font-size:14px;color:#0c0c0c;">Source</div>
<div class="s" style="left:370.50px;top:119.93px;letter-spacing:0.125px;font-size:14px;color:#0c0c0c;">Destination</div>
<div class="s" style="left:547.00px;top:119.93px;letter-spacing:0.077px;font-size:14px;color:#0c0c0c;">Protocol</div>
<div class="s" style="left:614.25px;top:119.93px;letter-spacing:-0.266px;font-size:14px;color:#0c0c0c;">Length</div>
<div class="s" style="left:663.90px;top:119.93px;letter-spacing:-0.003px;font-size:14px;color:#0c0c0c;">Info</div>
<div class="s" style="left:62.00px;top:1061.93px;letter-spacing:0.010px;font-size:14px;color:#0c0c0c;">enp0s20f0u4u4: &lt;live capture in progress&gt;</div>
<div class="s" style="left:1269.10px;top:1061.93px;letter-spacing:-0.222px;font-size:14px;color:#0c0c0c;">Packets: 10709 · Displayed: 8547 (79.8%)</div>
<div class="s" style="left:1821.00px;top:1061.93px;letter-spacing:0.058px;font-size:14px;color:#0c0c0c;">Profile: Default</div>
</body></html>
